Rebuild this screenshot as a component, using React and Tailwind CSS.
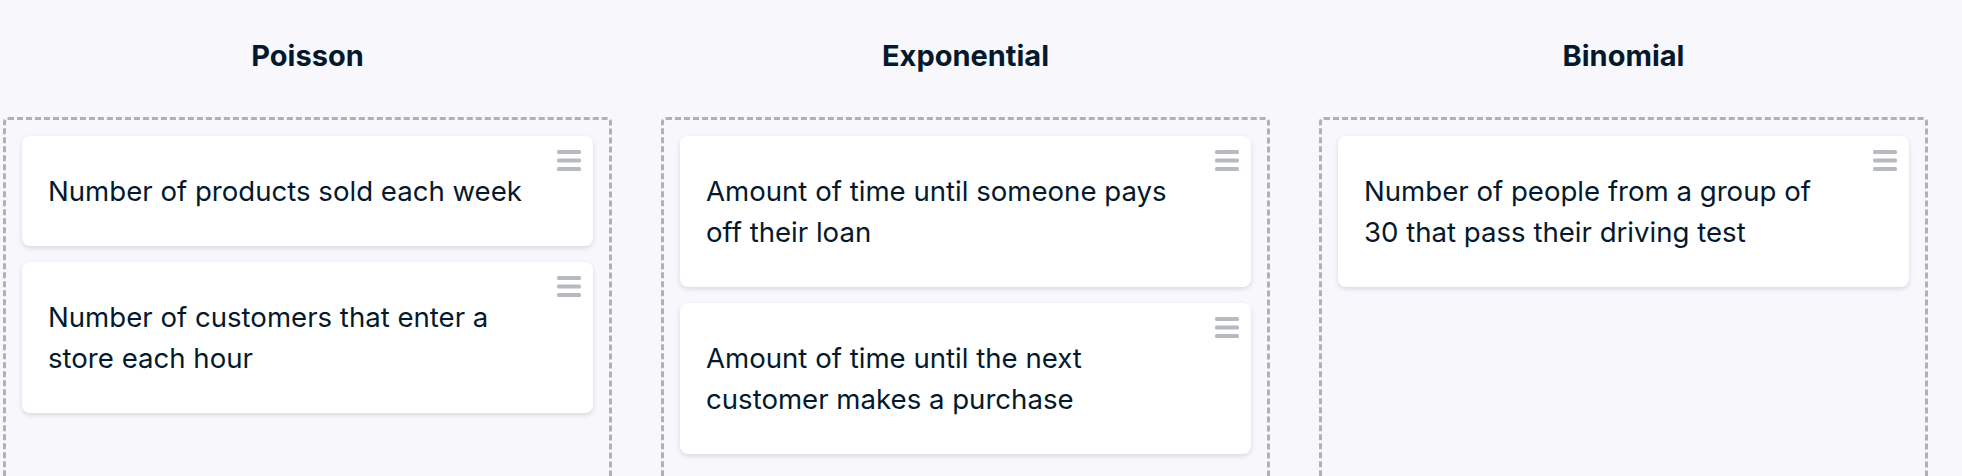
import React from "react";

const columns = [
  {
    title: "Poisson",
    items: [
      "Number of products sold each week",
      "Number of customers that enter a store each hour",
    ],
  },
  {
    title: "Exponential",
    items: [
      "Amount of time until someone pays off their loan",
      "Amount of time until the next customer makes a purchase",
    ],
  },
  {
    title: "Binomial",
    items: ["Number of people from a group of 30 that pass their driving test"],
  },
];

const DragHandle = () => (
  <svg width="24" height="21" viewBox="0 0 24 21" className="shrink-0">
    <rect x="0" y="0" width="24" height="4" rx="1.5" fill="#b7bac0" />
    <rect x="0" y="8.5" width="24" height="4" rx="1.5" fill="#b7bac0" />
    <rect x="0" y="17" width="24" height="4" rx="1.5" fill="#b7bac0" />
  </svg>
);

const Card = ({ text }) => (
  <div className="flex items-start bg-white rounded-[8px] shadow-[0_2px_5px_rgba(5,25,45,0.13)]">
    <p className="w-[505px] pl-[26px] pt-[35px] pb-[34px] text-[27.6px] leading-[41px] text-[#05192d]">
      {text}
    </p>
    <div className="ml-auto mt-[14px] mr-[12px]">
      <DragHandle />
    </div>
  </div>
);

export default function App() {
  return (
    <div
      className="min-h-[476px] bg-[#f7f7fc] overflow-hidden"
      style={{ fontFamily: "Inter, 'Liberation Sans', sans-serif" }}
    >
      <div className="flex gap-[49px] pl-[3px]">
        {columns.map((col) => (
          <div key={col.title} className="w-[609px] shrink-0 flex flex-col">
            {/* Column heading */}
            <h2 className="mt-[36px] mb-[41px] h-[40px] text-center text-[29px] leading-[40px] font-bold text-[#05192d]">
              {col.title}
            </h2>

            {/* Drop zone */}
            <div className="min-h-[420px] border-[3px] border-dashed border-[#aeb1b8] rounded-[5px] p-[16px] flex flex-col gap-4">
              {col.items.map((item) => (
                <Card key={item} text={item} />
              ))}
            </div>
          </div>
        ))}
      </div>
    </div>
  );
}
